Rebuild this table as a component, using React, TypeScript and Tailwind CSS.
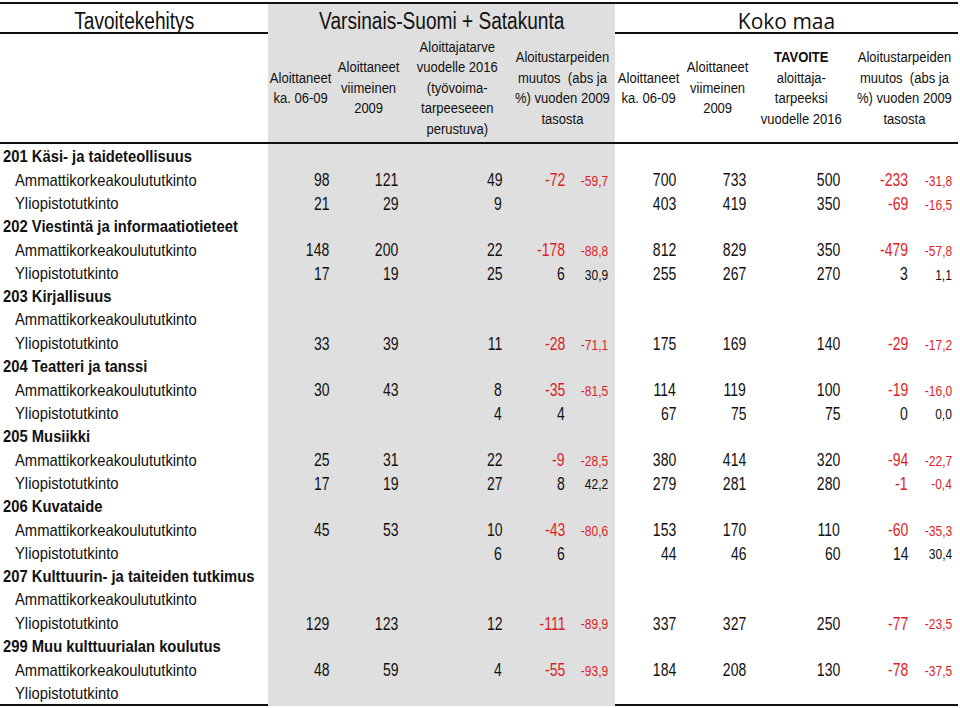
import React from "react";

const F = { fontFamily: '"Liberation Sans", Arial, sans-serif' };

type Row = { cat?: boolean; label: string; v?: string[] };

const E = ["", "", "", "", "", "", "", "", "", ""];

const rows: Row[] = [
  { cat: true, label: "201 Käsi- ja taideteollisuus" },
  { label: "Ammattikorkeakoulututkinto", v: ["98", "121", "49", "-72", "-59,7", "700", "733", "500", "-233", "-31,8"] },
  { label: "Yliopistotutkinto", v: ["21", "29", "9", "", "", "403", "419", "350", "-69", "-16,5"] },
  { cat: true, label: "202 Viestintä ja informaatiotieteet" },
  { label: "Ammattikorkeakoulututkinto", v: ["148", "200", "22", "-178", "-88,8", "812", "829", "350", "-479", "-57,8"] },
  { label: "Yliopistotutkinto", v: ["17", "19", "25", "6", "30,9", "255", "267", "270", "3", "1,1"] },
  { cat: true, label: "203 Kirjallisuus" },
  { label: "Ammattikorkeakoulututkinto", v: E },
  { label: "Yliopistotutkinto", v: ["33", "39", "11", "-28", "-71,1", "175", "169", "140", "-29", "-17,2"] },
  { cat: true, label: "204 Teatteri ja tanssi" },
  { label: "Ammattikorkeakoulututkinto", v: ["30", "43", "8", "-35", "-81,5", "114", "119", "100", "-19", "-16,0"] },
  { label: "Yliopistotutkinto", v: ["", "", "4", "4", "", "67", "75", "75", "0", "0,0"] },
  { cat: true, label: "205 Musiikki" },
  { label: "Ammattikorkeakoulututkinto", v: ["25", "31", "22", "-9", "-28,5", "380", "414", "320", "-94", "-22,7"] },
  { label: "Yliopistotutkinto", v: ["17", "19", "27", "8", "42,2", "279", "281", "280", "-1", "-0,4"] },
  { cat: true, label: "206 Kuvataide" },
  { label: "Ammattikorkeakoulututkinto", v: ["45", "53", "10", "-43", "-80,6", "153", "170", "110", "-60", "-35,3"] },
  { label: "Yliopistotutkinto", v: ["", "", "6", "6", "", "44", "46", "60", "14", "30,4"] },
  { cat: true, label: "207 Kulttuurin- ja taiteiden tutkimus" },
  { label: "Ammattikorkeakoulututkinto", v: E },
  { label: "Yliopistotutkinto", v: ["129", "123", "12", "-111", "-89,9", "337", "327", "250", "-77", "-23,5"] },
  { cat: true, label: "299 Muu kulttuurialan koulutus" },
  { label: "Ammattikorkeakoulututkinto", v: ["48", "59", "4", "-55", "-93,9", "184", "208", "130", "-78", "-37,5"] },
  { label: "Yliopistotutkinto", v: E },
];

const GRID = "grid grid-cols-[268px_65px_72px_105px_60px_45px_68px_70px_97px_62px_46px]";
const PR = ["pr-[4px]", "pr-[7px]", "pr-[8px]", "pr-[5px]", "pr-[7px]", "pr-[7px]", "pr-[7px]", "pr-[10px]", "pr-[4px]", "pr-[6px]"];
const GRAY = "bg-[#dfdfdf]";

function HeadCell({ children, gray, span2 }: { children: React.ReactNode; gray?: boolean; span2?: boolean }) {
  return (
    <div
      className={`flex items-center justify-center text-center text-[15.5px] leading-[20.5px] text-[#111] ${gray ? GRAY : ""} ${span2 ? "col-span-2" : ""}`}
    >
      <span className="inline-block whitespace-nowrap scale-x-[0.84] origin-center">{children}</span>
    </div>
  );
}

export default function App() {
  return (
    <div className="w-[960px] h-[708px] bg-white pt-[2px] overflow-hidden" style={F}>
      <div className="w-[958px]">
        {/* title row */}
        <div className={`${GRID} h-[32px] border-y-2 border-[#111]`}>
          <div className="flex items-center justify-center text-[23px] text-[#111] pb-[2px]">
            <span className="inline-block whitespace-nowrap scale-x-[0.83] origin-center">Tavoitekehitys</span>
          </div>
          <div className={`col-span-5 flex items-center justify-center text-[23px] text-[#111] pb-[2px] ${GRAY}`}>
            <span className="inline-block whitespace-nowrap scale-x-[0.83] origin-center">Varsinais-Suomi + Satakunta</span>
          </div>
          <div
            className="col-span-5 flex items-center justify-center text-[21px] text-[#111] pb-[2px]"
            style={{ fontFamily: '"Open Sans", "Noto Sans", sans-serif' }}
          >
            Koko maa
          </div>
        </div>
        {/* header row */}
        <div className={`${GRID} h-[110px] border-b-2 border-[#111]`}>
          <div />
          <HeadCell gray>
            Aloittaneet<br />ka. 06-09
          </HeadCell>
          <HeadCell gray>
            Aloittaneet<br />viimeinen<br />2009
          </HeadCell>
          <HeadCell gray>
            Aloittajatarve<br />vuodelle 2016<br />(työvoima-<br />tarpeeseeen<br />perustuva)
          </HeadCell>
          <HeadCell gray span2>
            Aloitustarpeiden<br />muutos&nbsp; (abs ja<br />%) vuoden 2009<br />tasosta
          </HeadCell>
          <HeadCell>
            Aloittaneet<br />ka. 06-09
          </HeadCell>
          <HeadCell>
            Aloittaneet<br />viimeinen<br />2009
          </HeadCell>
          <HeadCell>
            <b>TAVOITE</b><br />aloittaja-<br />tarpeeksi<br />vuodelle 2016
          </HeadCell>
          <HeadCell span2>
            Aloitustarpeiden<br />muutos&nbsp; (abs ja<br />%) vuoden 2009<br />tasosta
          </HeadCell>
        </div>
        {/* data rows */}
        <div className="border-b-2 border-[#111]">
          {rows.map((r, i) => (
            <div key={i} className={`${GRID} h-[23.33px]`}>
              <div
                className={`flex items-center text-[#111] text-[17px] ${r.cat ? "pl-[3px] font-bold" : "pl-[15px]"}`}
              >
                <span className="inline-block whitespace-nowrap scale-x-[0.87] origin-left">{r.label}</span>
              </div>
              {Array.from({ length: 10 }).map((_, c) => {
                const val = r.v ? r.v[c] : "";
                const pct = c === 4 || c === 9;
                const red = val.startsWith("-");
                const gray = c < 5;
                return (
                  <div
                    key={c}
                    className={`flex items-center justify-end ${PR[c]} ${gray ? GRAY : ""} ${pct ? "text-[15px] pt-[2px]" : "text-[17.5px]"} ${red ? "text-[#dc1e28]" : "text-[#111]"}`}
                  >
                    <span className="inline-block whitespace-nowrap scale-x-[0.8] origin-right">{val}</span>
                  </div>
                );
              })}
            </div>
          ))}
        </div>
      </div>
    </div>
  );
}
